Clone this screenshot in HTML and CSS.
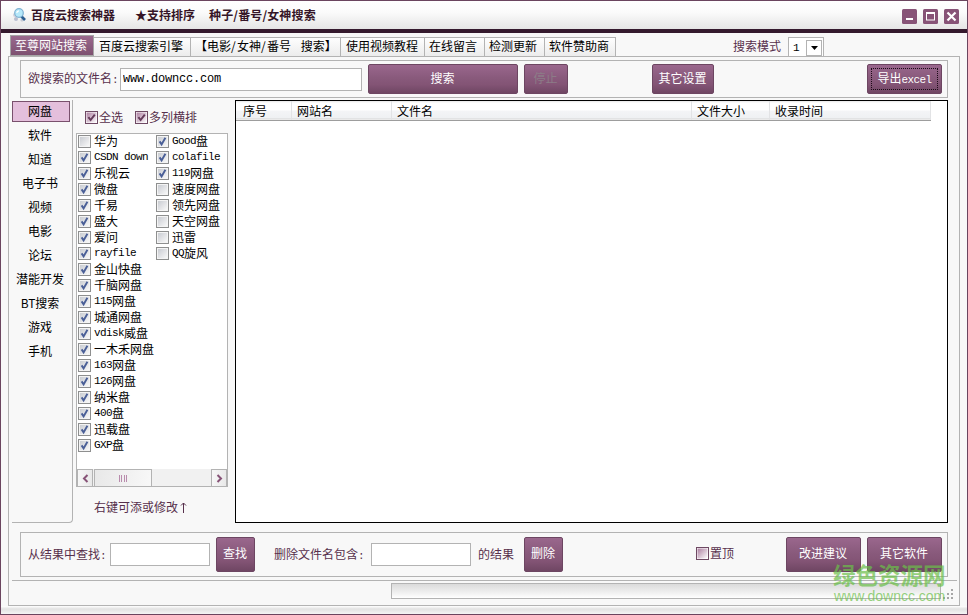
FILE: index.html
```html
<!DOCTYPE html>
<html lang="zh-CN">
<head>
  <meta charset="UTF-8">
  <title>百度云搜索神器</title>
  <link rel="stylesheet" href="styles.css">
</head>
<body>
  <!-- shared icons -->
  <svg class="defs">
    <defs>
      <linearGradient id="grey" x1="0" y1="0" x2="1" y2="1">
        <stop offset="0" stop-color="#c9ccd2"/>
        <stop offset="1" stop-color="#f8f8f8"/>
      </linearGradient>
      <linearGradient id="plum" x1="0" y1="0" x2="1" y2="1">
        <stop offset="0.1" stop-color="#b48ba9"/>
        <stop offset="1" stop-color="#ffffff"/>
      </linearGradient>
      <symbol id="off" viewBox="0 0 13 13">
        <rect x="0.5" y="0.5" width="12" height="12" fill="#f4f4f4" stroke="#8e8f8f"/>
        <rect x="2" y="2" width="9" height="9" fill="url(#grey)"/>
      </symbol>
      <symbol id="on" viewBox="0 0 13 13">
        <use href="#off"/>
        <path d="M3.6 6.4L5.6 9.4L9.4 2.8" fill="none" stroke="#4a5f97" stroke-width="1.9"/>
      </symbol>
      <symbol id="plum-off" viewBox="0 0 13 13">
        <rect x="0.5" y="0.5" width="12" height="12" fill="#fff" stroke="#6e4963"/>
        <rect x="1.5" y="1.5" width="10" height="10" fill="url(#plum)"/>
      </symbol>
      <symbol id="plum-on" viewBox="0 0 13 13">
        <use href="#plum-off"/>
        <path d="M3.4 6.2L5.6 9L9.8 3.6" fill="none" stroke="#643a59" stroke-width="2"/>
      </symbol>
    </defs>
  </svg>

  <div class="window">
    <header class="titlebar">
      <svg class="logo" width="16" height="16" viewBox="0 0 16 16">
        <circle cx="3" cy="8" r="2" fill="#d3d3dc"/>
        <circle cx="4" cy="12" r="2" fill="#b9bfd0"/>
        <circle cx="10" cy="13" r="1.6" fill="#c5c9d4"/>
        <path d="M9 9L13 13" stroke="#2b5d90" stroke-width="2.6"/>
        <circle cx="7" cy="6" r="4.3" fill="#b5e8fa" stroke="#7fb2d3" stroke-width="1.2"/>
        <path d="M4.8 6A2.4 2.4 0 0 1 7 3.8" fill="none" stroke="#fff" stroke-width="1.2"/>
      </svg>
      <h1><span>百度云搜索神器</span><span>★支持排序</span><span>种子/番号/女神搜索</span></h1>
      <div class="controls">
        <svg width="15" height="15" viewBox="0 0 15 15"><rect width="15" height="15" rx="1.5" fill="#875377"/><path d="M4 10H11" stroke="#fff" stroke-width="2"/></svg>
        <svg width="15" height="15" viewBox="0 0 15 15"><rect width="15" height="15" rx="1.5" fill="#875377"/><rect x="3.5" y="4" width="8" height="7" fill="none" stroke="#fff"/><path d="M3 4H12" stroke="#fff" stroke-width="2"/></svg>
        <svg width="15" height="15" viewBox="0 0 15 15"><rect width="15" height="15" rx="1.5" fill="#875377"/><path d="M3.5 3.5L11.5 11.5M11.5 3.5L3.5 11.5" stroke="#fff" stroke-width="2.2"/></svg>
      </div>
    </header>

    <nav class="tabs">
      <a class="tab active">至尊网站搜索</a>
      <a class="tab tab-engine">百度云搜索引擎</a>
      <a class="tab tab-movie">【电影<b>/</b>女神<b>/</b>番号 <i></i>搜索】</a>
      <a class="tab tab-video">使用视频教程</a>
      <a class="tab">在线留言</a>
      <a class="tab">检测更新</a>
      <a class="tab tab-last">软件赞助商</a>
      <div class="mode">
        <label>搜索模式</label>
        <div class="select">
          <span class="en">1</span>
          <div class="drop"><svg width="7" height="4" viewBox="0 0 7 4"><path d="M0 0H7L3.5 4Z"/></svg></div>
        </div>
      </div>
    </nav>

    <main class="panel">
      <section class="box toolbar">
        <label>欲搜索的文件名<span class="en">:</span></label>
        <input class="filename" type="text" value="www.downcc.com">
        <button class="btn-search">搜索</button>
        <button class="btn-stop" disabled>停止</button>
        <button class="btn-settings">其它设置</button>
        <button class="btn-export"><span>导出<span class="en">excel</span></span></button>
      </section>

      <div class="content">
        <ul class="categories">
          <li class="current">网盘</li>
          <li>软件</li>
          <li>知道</li>
          <li>电子书</li>
          <li>视频</li>
          <li>电影</li>
          <li>论坛</li>
          <li>潜能开发</li>
          <li>BT搜索</li>
          <li>游戏</li>
          <li>手机</li>
        </ul>

        <div class="sites">
          <div class="options">
            <span><svg class="check"><use href="#plum-on"/></svg>全选</span>
            <span><svg class="check"><use href="#plum-on"/></svg>多列横排</span>
          </div>
          <div class="site-box">
            <div class="site-list">
              <ul>
                <li><svg class="check"><use href="#off"/></svg>华为</li>
                <li><svg class="check"><use href="#on"/></svg><span class="en">CSDN down</span></li>
                <li><svg class="check"><use href="#on"/></svg>乐视云</li>
                <li><svg class="check"><use href="#on"/></svg>微盘</li>
                <li><svg class="check"><use href="#on"/></svg>千易</li>
                <li><svg class="check"><use href="#on"/></svg>盛大</li>
                <li><svg class="check"><use href="#on"/></svg>爱问</li>
                <li><svg class="check"><use href="#on"/></svg><span class="en">rayfile</span></li>
                <li><svg class="check"><use href="#on"/></svg>金山快盘</li>
                <li><svg class="check"><use href="#on"/></svg>千脑网盘</li>
                <li><svg class="check"><use href="#on"/></svg><span class="en">115</span>网盘</li>
                <li><svg class="check"><use href="#on"/></svg>城通网盘</li>
                <li><svg class="check"><use href="#on"/></svg><span class="en">vdisk</span>威盘</li>
                <li><svg class="check"><use href="#on"/></svg>一木禾网盘</li>
                <li><svg class="check"><use href="#on"/></svg><span class="en">163</span>网盘</li>
                <li><svg class="check"><use href="#on"/></svg><span class="en">126</span>网盘</li>
                <li><svg class="check"><use href="#on"/></svg>纳米盘</li>
                <li><svg class="check"><use href="#on"/></svg><span class="en">400</span>盘</li>
                <li><svg class="check"><use href="#on"/></svg>迅载盘</li>
                <li><svg class="check"><use href="#on"/></svg><span class="en">GXP</span>盘</li>
              </ul>
              <ul>
                <li><svg class="check"><use href="#on"/></svg><span class="en">Good</span>盘</li>
                <li><svg class="check"><use href="#on"/></svg><span class="en">colafile</span></li>
                <li><svg class="check"><use href="#on"/></svg><span class="en">119</span>网盘</li>
                <li><svg class="check"><use href="#off"/></svg>速度网盘</li>
                <li><svg class="check"><use href="#off"/></svg>领先网盘</li>
                <li><svg class="check"><use href="#off"/></svg>天空网盘</li>
                <li><svg class="check"><use href="#off"/></svg>迅雷</li>
                <li><svg class="check"><use href="#off"/></svg><span class="en">QQ</span>旋风</li>
              </ul>
            </div>
            <div class="scrollbar">
              <div class="arrow"><svg width="7" height="9" viewBox="0 0 7 9"><path d="M5.5 1L2 4.5L5.5 8"/></svg></div>
              <div class="thumb"><svg width="8" height="7" viewBox="0 0 8 7"><path d="M0.5 0V7M2.5 0V7M5.5 0V7M7.5 0V7"/></svg></div>
              <div class="arrow arrow-right"><svg width="7" height="9" viewBox="0 0 7 9"><path d="M1.5 1L5 4.5L1.5 8"/></svg></div>
            </div>
          </div>
          <p class="hint">右键可添或修改<svg width="8" height="11" viewBox="0 0 8 11"><path d="M4.5 11V1M2 3.5L4.5 1L7 3.5"/></svg></p>
        </div>

        <div class="results">
          <div class="head">
            <span class="col-no">序号</span>
            <span class="col-site">网站名</span>
            <span class="col-file">文件名</span>
            <span class="col-size">文件大小</span>
            <span class="col-time">收录时间</span>
          </div>
        </div>
      </div>

      <section class="box filter">
        <label>从结果中查找<span class="en">:</span></label>
        <input class="find" type="text">
        <button class="btn-find">查找</button>
        <label class="remove-label">删除文件名包含<span class="en">:</span></label>
        <input class="remove" type="text">
        <label class="remove-tail">的结果</label>
        <button class="btn-find">删除</button>
        <span class="ontop"><svg class="check"><use href="#plum-off"/></svg>置顶</span>
        <button class="btn-wide">改进建议</button>
        <button class="btn-wide btn-more">其它软件</button>
      </section>

      <footer class="status">
        <div class="progress"></div>
        <svg class="grip" width="10" height="10" viewBox="0 0 10 10"><path d="M8 0h2v2h-2zM4 4h2v2h-2zM8 4h2v2h-2zM0 8h2v2h-2zM4 8h2v2h-2zM8 8h2v2h-2z"/></svg>
      </footer>
    </main>

    <div class="watermark">
      <strong>绿色资源网</strong>
      <span>www.downcc.com</span>
    </div>
  </div>
</body>
</html>
```
FILE: styles.css
```css
:root {
  --plum: #6b455f;
  --text: #57304c;
  --line: #b3b3b3;
  --surface: #f8f8f8;
}

* {
  box-sizing: border-box;
}

body {
  margin: 0;
  font: 12px/16px "Noto Sans CJK SC", sans-serif;
  color: #000;
}

ul, p, h1 {
  margin: 0;
  padding: 0;
  list-style: none;
}

.defs {
  position: absolute;
  width: 0;
  height: 0;
}

/* half-width latin text, 6px per character */
.en {
  font-family: "Liberation Mono", monospace;
  font-size: 11px;
  letter-spacing: -0.6px;
  white-space: pre;
}

.window {
  position: relative;
  width: 968px;
  height: 615px;
  border: 1px solid var(--plum);
  background: linear-gradient(var(--surface) 605px, #fff 605px, #e2e2e2 608px, #f5f5f5);
  overflow: hidden;
}

.titlebar {
  display: flex;
  align-items: center;
  height: 32px;
  padding: 0 8px 2px 11px;
  border-bottom: 4px solid #351a2e;
  background: linear-gradient(#fff, #fbfbfb 40%, #e5e5e5);
}

.titlebar h1 {
  display: flex;
  margin: 2px 0 0 3px;
  font-size: 12px;
  line-height: 16px;
  color: #351527;
}

.logo {
  margin-top: 2px;
}

.titlebar h1 span {
  margin-right: 20px;
  white-space: nowrap;
}

.titlebar h1 span + span {
  margin-right: 14px;
}

.titlebar h1 span:last-child {
  letter-spacing: 0.15px;
}

.controls {
  display: flex;
  gap: 6px;
  margin: 4px 0 0 auto;
}

.tabs {
  display: flex;
  align-items: flex-end;
  height: 23px;
  padding-left: 9px;
}

.tab {
  height: 19px;
  padding: 0 4px;
  border: 1px solid var(--line);
  border-left-width: 0;
  border-bottom: 0;
  background: linear-gradient(#fefefe, #ececec);
  line-height: 15px;
  white-space: nowrap;
}

.tab.active {
  width: 84px;
  height: 21px;
  border: 1px solid #a5a5a5;
  background: linear-gradient(#9b698e, #7d5070);
  color: #fff;
  line-height: 18px;
}

.tab-engine {
  width: 97px;
  padding-left: 5px;
}

.tab-movie {
  width: 150px;
}

.tab-movie b {
  display: inline-block;
  width: 6px;
  font-weight: normal;
}

.tab-movie i {
  display: inline-block;
  width: 7px;
}

.tab-video {
  width: 84px;
  padding-left: 5px;
}

.tab:nth-child(5), .tab:nth-child(6) {
  width: 60px;
}

.tab-last {
  width: 71px;
}

.mode {
  display: flex;
  align-items: center;
  margin: 0 143px 0 auto;
  color: var(--text);
}

.mode label {
  margin-bottom: 2px;
}

.select {
  display: flex;
  align-items: center;
  justify-content: space-between;
  width: 36px;
  height: 19px;
  margin-left: 7px;
  padding: 1px 1px 0 4px;
  border: 1px solid var(--line);
  border-bottom: 0;
  background: #fff;
  color: #000;
}

.drop {
  display: flex;
  align-items: center;
  justify-content: center;
  width: 16px;
  height: 16px;
  border: 1px solid var(--line);
}

.panel {
  width: 952px;
  height: 550px;
  margin-left: 7px;
  padding: 3px 2px 0 3px;
  border: 1px solid var(--line);
  background: var(--surface);
}

.box {
  display: flex;
  align-items: center;
  width: 928px;
  margin-left: 8px;
  padding-left: 7px;
  border: 1px solid var(--line);
  color: var(--text);
}

.toolbar {
  height: 38px;
}

label {
  white-space: nowrap;
}

input {
  height: 23px;
  padding: 0 2px;
  border: 1px solid var(--line);
  outline: none;
  background: #fff;
}

.filename {
  width: 242px;
  margin: 1px 0 0 2px;
  padding-bottom: 1px;
  font: 12px "Liberation Mono", monospace;
  letter-spacing: -0.2px;
}

button {
  height: 30px;
  padding: 0 1px 3px 0;
  border: 1px solid #6d4662;
  border-radius: 2px;
  background: linear-gradient(#9a678d, #895a7c 45%, #835475 70%, #6f4663);
  color: #fff;
  font: 12px/16px "Noto Sans CJK SC", sans-serif;
}

button:disabled {
  color: #8c7c87;
}

.btn-search {
  width: 150px;
  margin-left: 6px;
}

.btn-stop {
  width: 44px;
  margin-left: 6px;
}

.btn-settings {
  width: 62px;
  margin-left: 84px;
}

.btn-export {
  width: 75px;
  margin-left: 153px;
  padding: 0;
}

.btn-export > span {
  display: block;
  height: 22px;
  margin: 0 3px;
  border: 1px dotted #1c0b17;
  line-height: 17px;
  white-space: nowrap;
}

.content {
  display: flex;
  height: 425px;
  margin-top: 2px;
}

.categories {
  width: 61px;
  height: 423px;
  padding-top: 1px;
  border: 1px solid var(--line);
  border-width: 0 1px 1px 0;
  border-bottom-right-radius: 4px;
  text-align: center;
}

.categories li {
  width: 56px;
  height: 24px;
  line-height: 22px;
  white-space: nowrap;
}

.categories .current {
  width: 58px;
  height: 21px;
  margin-bottom: 2px;
  padding-right: 2px;
  border: 1px solid #79506d;
  background: #e4bfdc;
  line-height: 18px;
}

.sites {
  width: 152px;
  margin-left: 3px;
  color: var(--text);
}

.check {
  flex: none;
  width: 13px;
  height: 13px;
}

.options {
  display: flex;
  gap: 12px;
  height: 33px;
  padding: 9px 0 0 9px;
}

.options span, .ontop {
  display: flex;
  align-items: center;
  height: 16px;
  gap: 1px;
}

.site-box {
  height: 354px;
  border: 1px solid var(--line);
  background: #fff;
  color: #000;
}

.site-list {
  display: flex;
  height: 335px;
}

.site-list ul {
  flex: none;
  width: 78px;
  padding-left: 1px;
}

.site-list li {
  display: flex;
  align-items: flex-start;
  height: 16px;
  line-height: 13px;
  white-space: nowrap;
}

.site-list li .check {
  margin: 1px 3px 0 0;
}

.site-list li .en {
  line-height: 15px;
}

.scrollbar {
  display: flex;
  height: 17px;
  background: #f1f1f1;
}

.arrow, .thumb {
  display: flex;
  align-items: center;
  justify-content: center;
  width: 16px;
  border: 1px solid var(--line);
  border-bottom-width: 0;
  background: linear-gradient(90deg, #f7f7f7, #e9e9e9);
}

.arrow-right {
  margin-left: auto;
}

.thumb {
  width: 58px;
  margin-left: 1px;
  background: linear-gradient(100deg, #e8e8e8, #f8f8f8);
}

.arrow path {
  fill: none;
  stroke: #875377;
  stroke-width: 2;
}

.thumb path {
  stroke: #b98bad;
}

.hint {
  display: flex;
  align-items: center;
  gap: 1px;
  margin: 12px 0 0 18px;
}

.hint path {
  fill: none;
  stroke: var(--text);
}

.results {
  width: 713px;
  height: 423px;
  margin-left: 7px;
  border: 1px solid #000;
  background: #fff;
}

.head {
  display: flex;
  width: 695px;
  height: 20px;
  border-bottom: 1px solid #9d9d9d;
  background: linear-gradient(#e7e7e7, #fff 2px, #fff 9px, #f3f4f6 10px, #eff1f3 17px, #d5d5d5 18px, #fff 19px);
}

.head span {
  padding: 1px 0 0 5px;
  border-right: 1px solid #e2e3e5;
  line-height: 18px;
}

.col-no {
  width: 56px;
  text-indent: 2px;
}

.col-site {
  width: 100px;
}

.col-file {
  width: 300px;
}

.col-size {
  width: 78px;
}

.col-time {
  flex: 1;
}

.filter {
  height: 45px;
  margin-top: 7px;
}

.filter input {
  width: 100px;
}

.filter button {
  height: 35px;
  padding-bottom: 4px;
}

.find {
  margin-left: 4px;
}

.filter .btn-find {
  width: 39px;
  margin-left: 6px;
}

.remove-label {
  margin-left: 19px;
}

.remove {
  margin-left: 7px;
}

.remove-tail {
  margin: 0 4px 2px 7px;
}

.ontop {
  margin: 0 0 3px 133px;
}

.filter .btn-wide {
  width: 75px;
  margin-left: auto;
}

.filter .btn-more {
  margin: 0 5px 0 6px;
}

.status {
  display: flex;
  height: 25px;
  margin-top: 3px;
  border-top: 1px solid var(--line);
}

.progress {
  width: 550px;
  height: 16px;
  margin: 2px 0 0 379px;
  border: 1px solid var(--line);
  background: linear-gradient(#dadada, #f5f5f5 75%, #fff);
}

.grip {
  margin: 8px 0 0 2px;
  fill: #a6a6a6;
}

/* site mark over the bottom right corner */
.watermark {
  position: absolute;
  left: 832px;
  top: 563px;
  color: #6cc04a;
  opacity: 0.7;
  white-space: nowrap;
}

.watermark strong, .watermark span {
  display: block;
}

.watermark strong {
  font: bold 22.5px/26px "Liberation Sans", "Noto Sans CJK SC", sans-serif;
}

.watermark span {
  margin: -2px 0 0 1px;
  font: 14px/16px "Liberation Sans", sans-serif;
}
```
